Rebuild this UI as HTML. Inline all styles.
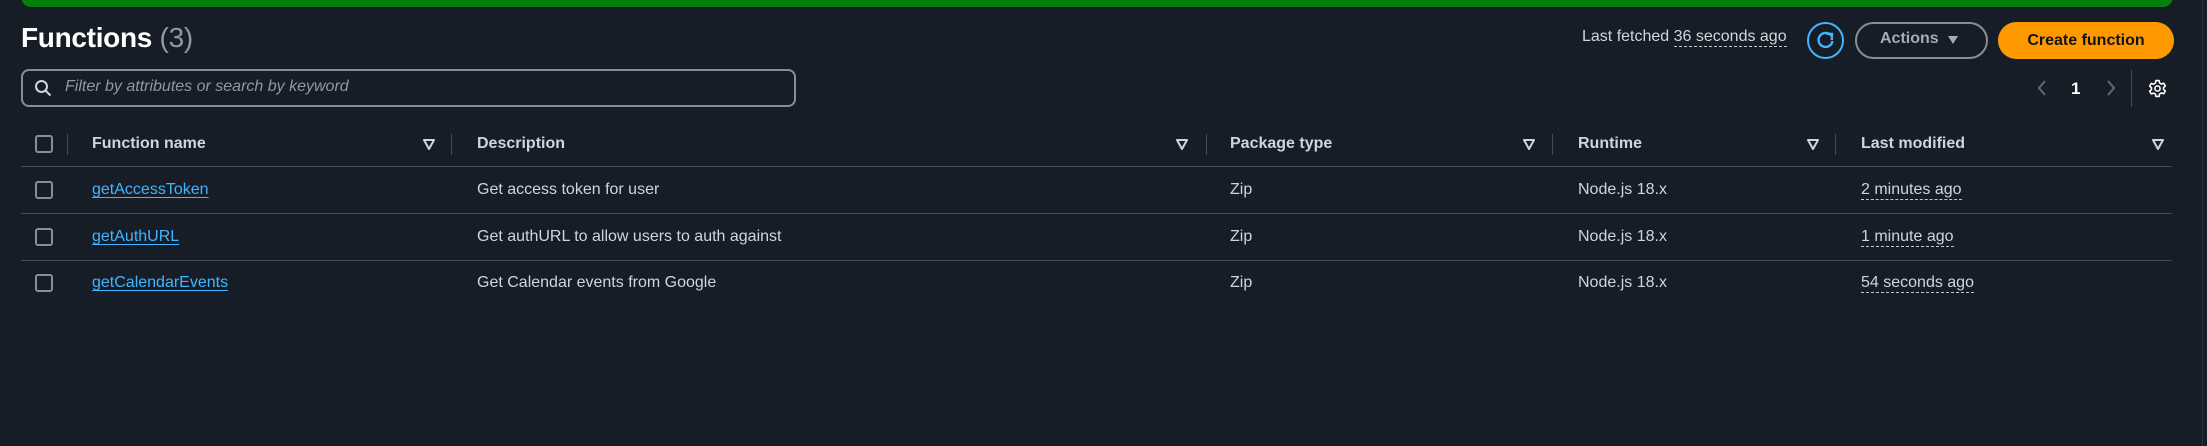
<!DOCTYPE html>
<html><head><meta charset="utf-8"><style>
*{margin:0;padding:0;box-sizing:border-box}
body{width:2207px;height:446px;background:#161d26;font-family:"Liberation Sans",sans-serif;color:#d1d5db;position:relative;overflow:hidden}
.a{position:absolute}
.green{left:21px;top:-10px;width:2152px;height:17px;background:#037f0c;border-radius:0 0 10px 10px}
.title{left:21px;top:22px;font-size:28px;font-weight:bold;color:#fff;letter-spacing:-0.3px}
.title span{font-weight:normal;color:#8d99a8}
.search{left:21px;top:69px;width:775px;height:38px;border:2px solid #8c8c94;border-radius:8px}
.ph{left:65px;top:78px;font-size:16px;font-style:italic;color:#8d99a8}
.cb{width:18px;height:18px;border:2px solid #8c8c94;border-radius:3px}
.sep{width:1px;background:#414d5c}
.hd{font-size:16px;font-weight:bold;color:#d1d5db;top:135px}
.sort{top:138px;width:14px;height:12px}
.line{height:1px;background:#414d5c;left:21px;width:2151px}
.td{font-size:16px;color:#d1d5db}
.lnk{color:#42b4ff;text-decoration:underline;text-underline-offset:3px}
.dash{border-bottom:1.5px dashed #c6c6cd;padding-bottom:1px}
</style></head><body>
<div class="a green"></div>
<div class="a title">Functions <span>(3)</span></div>
<div class="a" style="left:1582px;top:28px;font-size:16px;color:#d1d5db">Last fetched <span class="dash">36 seconds ago</span></div>
<div class="a" style="left:1807px;top:22px;width:37px;height:37px;border:2px solid #42b4ff;border-radius:50%"></div>
<svg class="a" style="left:1812px;top:27px" width="27" height="27" viewBox="0 0 27 27"><path d="M19 8.5A7 7 0 1 0 20.5 14" fill="none" stroke="#42b4ff" stroke-width="2.4"/><path d="M14 6.5L20 7L19.8 13" fill="none" stroke="#42b4ff" stroke-width="2.4"/></svg>
<div class="a" style="left:1855px;top:22px;width:133px;height:37px;border:2px solid #8c8c94;border-radius:20px"></div>
<div class="a" style="left:1880px;top:30px;font-size:16px;font-weight:bold;color:#a4acb7">Actions</div>
<svg class="a" style="left:1947px;top:34px" width="12" height="12"><path d="M1 2h10L6 10z" fill="#a4acb7"/></svg>
<div class="a" style="left:1998px;top:22px;width:176px;height:37px;background:#ff9900;border-radius:20px;color:#0f141a;font-weight:bold;font-size:16px;text-align:center;line-height:37px">Create function</div>
<svg class="a" style="left:2035px;top:79px" width="14" height="18"><path d="M10 2L4 9l6 7" fill="none" stroke="#656871" stroke-width="2"/></svg>
<div class="a" style="left:2071px;top:79px;font-size:17px;font-weight:bold;color:#fff">1</div>
<svg class="a" style="left:2104px;top:79px" width="14" height="18"><path d="M4 2l6 7-6 7" fill="none" stroke="#656871" stroke-width="2"/></svg>
<div class="a sep" style="left:2131px;top:70px;height:37px"></div>
<svg class="a" style="left:2148px;top:79px" width="19" height="19" viewBox="0 0 24 24"><path d="M10 2h4l.6 3 2.4 1.4 2.9-1 2 3.4-2.3 2v2.4l2.3 2-2 3.4-2.9-1L14.6 19 14 22h-4l-.6-3L7 17.8l-2.9 1-2-3.4 2.3-2v-2.4l-2.3-2 2-3.4 2.9 1L9.4 5z" fill="none" stroke="#fff" stroke-width="2" stroke-linejoin="round"/><circle cx="12" cy="12" r="3.3" fill="none" stroke="#fff" stroke-width="2"/></svg>
<div class="a search"></div>
<svg class="a" style="left:34px;top:79px" width="18" height="18"><circle cx="7.5" cy="7.5" r="5.5" fill="none" stroke="#d1d5db" stroke-width="2"/><path d="M11.5 11.5l5 5" stroke="#d1d5db" stroke-width="2"/></svg>
<div class="a ph">Filter by attributes or search by keyword</div>

<div class="a cb" style="left:35px;top:135px"></div>
<div class="a sep" style="left:67px;top:134px;height:21px"></div>
<div class="a hd" style="left:92px">Function name</div>
<svg class="a sort" style="left:422px"><path d="M2 2h10L7 11z" fill="none" stroke="#d1d5db" stroke-width="2" stroke-linejoin="round"/></svg>
<div class="a sep" style="left:451px;top:134px;height:21px"></div>
<div class="a hd" style="left:477px">Description</div>
<svg class="a sort" style="left:1175px"><path d="M2 2h10L7 11z" fill="none" stroke="#d1d5db" stroke-width="2" stroke-linejoin="round"/></svg>
<div class="a sep" style="left:1206px;top:134px;height:21px"></div>
<div class="a hd" style="left:1230px">Package type</div>
<svg class="a sort" style="left:1522px"><path d="M2 2h10L7 11z" fill="none" stroke="#d1d5db" stroke-width="2" stroke-linejoin="round"/></svg>
<div class="a sep" style="left:1552px;top:134px;height:21px"></div>
<div class="a hd" style="left:1578px">Runtime</div>
<svg class="a sort" style="left:1806px"><path d="M2 2h10L7 11z" fill="none" stroke="#d1d5db" stroke-width="2" stroke-linejoin="round"/></svg>
<div class="a sep" style="left:1835px;top:134px;height:21px"></div>
<div class="a hd" style="left:1861px">Last modified</div>
<svg class="a sort" style="left:2151px"><path d="M2 2h10L7 11z" fill="none" stroke="#d1d5db" stroke-width="2" stroke-linejoin="round"/></svg>
<div class="a line" style="top:166px"></div>

<div class="a cb" style="left:35px;top:181px"></div>
<div class="a td" style="left:92px;top:181px"><span class="lnk">getAccessToken</span></div>
<div class="a td" style="left:477px;top:181px">Get access token for user</div>
<div class="a td" style="left:1230px;top:181px">Zip</div>
<div class="a td" style="left:1578px;top:181px">Node.js 18.x</div>
<div class="a td" style="left:1861px;top:181px"><span class="dash">2 minutes ago</span></div>
<div class="a line" style="top:213px"></div>

<div class="a cb" style="left:35px;top:228px"></div>
<div class="a td" style="left:92px;top:228px"><span class="lnk">getAuthURL</span></div>
<div class="a td" style="left:477px;top:228px">Get authURL to allow users to auth against</div>
<div class="a td" style="left:1230px;top:228px">Zip</div>
<div class="a td" style="left:1578px;top:228px">Node.js 18.x</div>
<div class="a td" style="left:1861px;top:228px"><span class="dash">1 minute ago</span></div>
<div class="a line" style="top:260px"></div>

<div class="a cb" style="left:35px;top:274px"></div>
<div class="a td" style="left:92px;top:274px"><span class="lnk">getCalendarEvents</span></div>
<div class="a td" style="left:477px;top:274px">Get Calendar events from Google</div>
<div class="a td" style="left:1230px;top:274px">Zip</div>
<div class="a td" style="left:1578px;top:274px">Node.js 18.x</div>
<div class="a td" style="left:1861px;top:274px"><span class="dash">54 seconds ago</span></div>

<div class="a" style="left:2202px;top:0;width:1px;height:446px;background:#2a323d"></div>
</body></html>
